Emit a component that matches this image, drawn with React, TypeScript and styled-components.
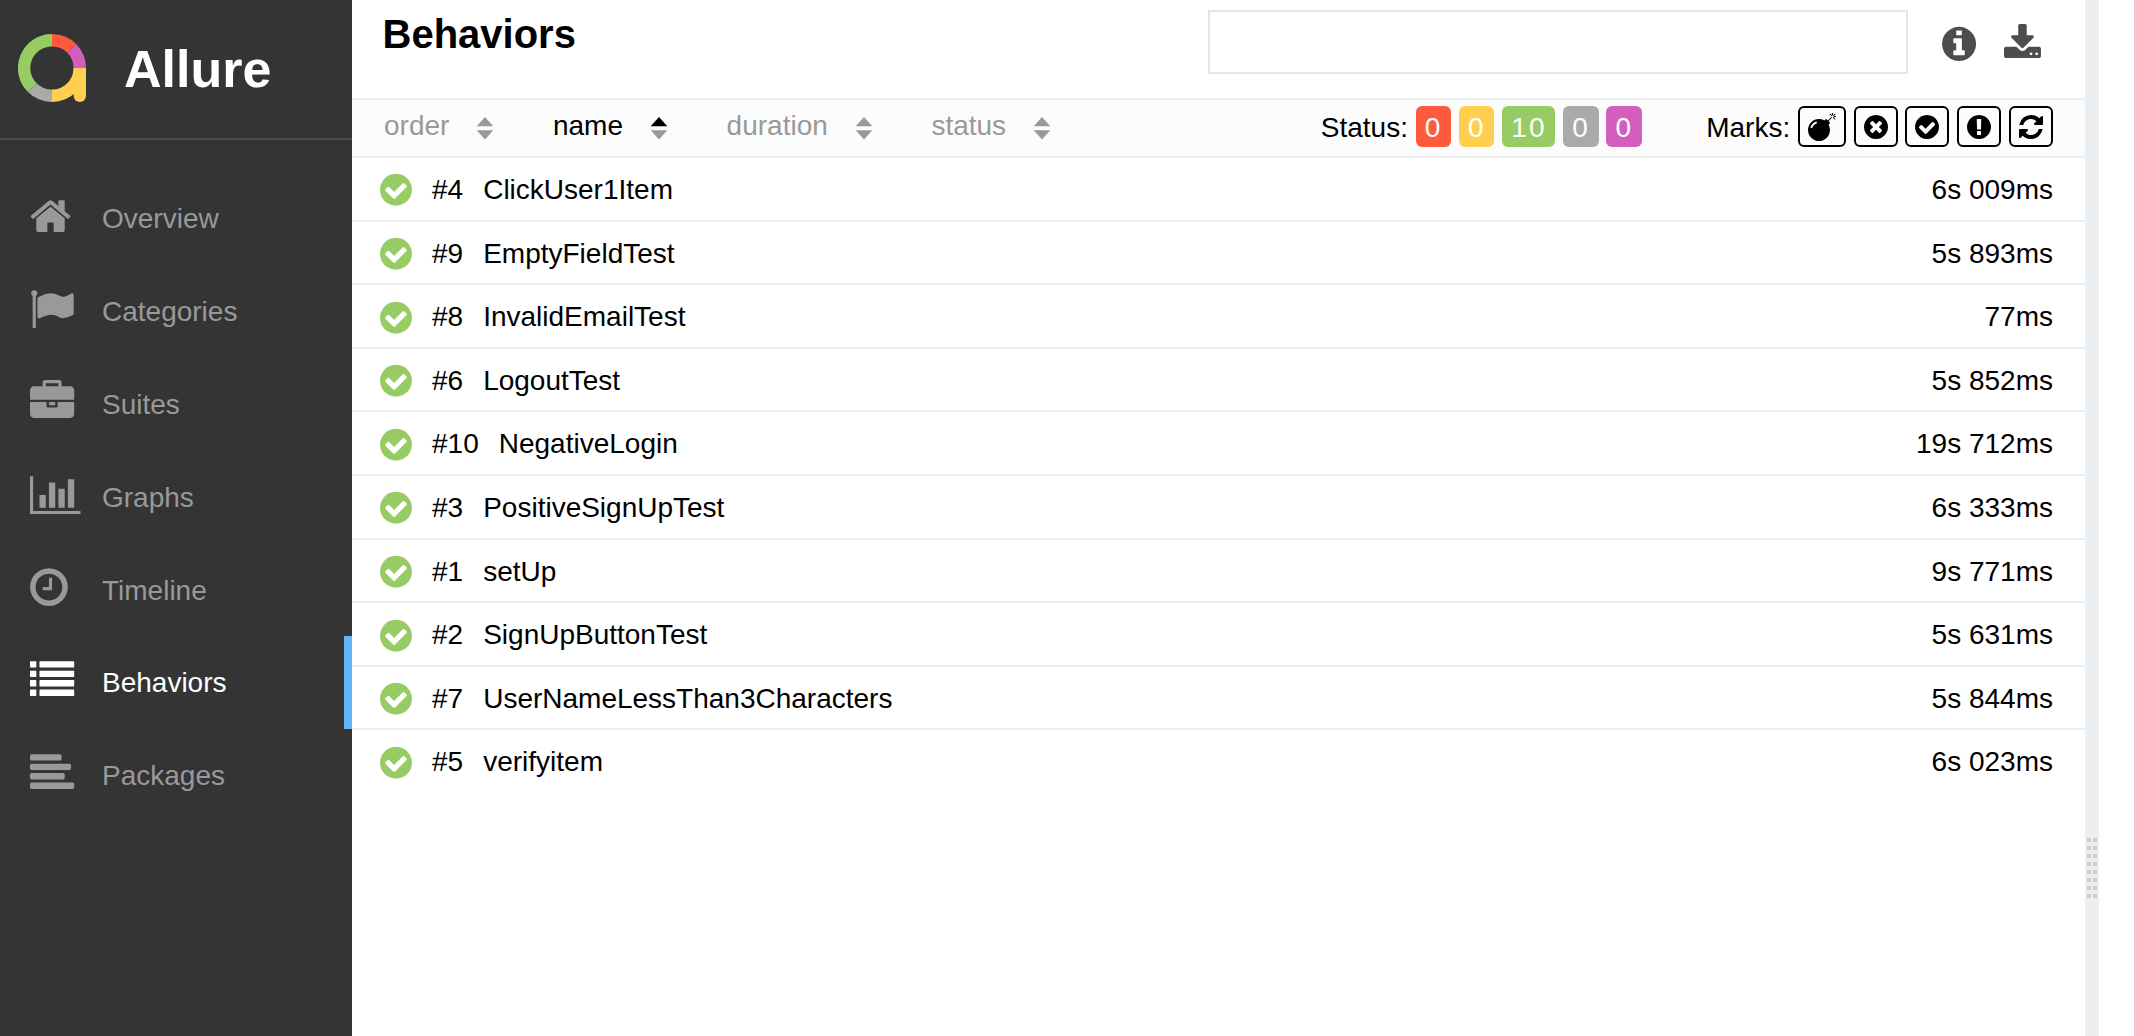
import React from "react";
import styled, { createGlobalStyle } from "styled-components";

const Global = createGlobalStyle`
  * { box-sizing: border-box; }
  html, body { margin: 0; padding: 0; }
  body {
    font-family: Helvetica, "Liberation Sans", Arial, sans-serif;
    font-size: 28px;
    color: #000;
    background: #fff;
    overflow: hidden;
  }
`;

const DISC =
  "q0 209-103 385.5t-279.5 279.5-385.5 103-385.5-103-279.5-279.5-103-385.5 103-385.5 279.5-279.5 385.5-103 385.5 103 279.5 279.5 103 385.5z";

const bar = (x: number, y: number, w: number, h: number, r: number) =>
  `M${x + r} ${y}h${w - 2 * r}q${r} 0 ${r} ${r}v${h - 2 * r}q0 ${r}-${r} ${r}h-${w - 2 * r}q-${r} 0-${r}-${r}v-${h - 2 * r}q0-${r} ${r}-${r}z`;

interface Glyph {
  d: string;
  x?: number;
  w?: number;
}

const glyphs: Record<string, Glyph> = {
  home: {
    x: 64,
    w: 1664,
    d: "M1472 992v480q0 26-19 45t-45 19h-384v-384h-256v384h-384q-26 0-45-19t-19-45v-480q0-1 .5-3t.5-3l575-474 575 474q1 2 1 6zm223-69l-62 74q-8 9-21 11h-3q-13 0-21-7l-692-577-692 577q-12 8-24 7-13-2-21-11l-62-74q-8-10-7-23.5t11-21.5l719-599q32-26 76-26t76 26l244 204v-195q0-14 9-23t23-9h192q14 0 23 9t9 23v408l219 182q10 8 11 21.5t-7 23.5z",
  },
  flag: {
    x: 20,
    d: "M320 256q0 72-64 110v1266q0 13-9.5 22.5t-22.5 9.5h-64q-13 0-22.5-9.5t-9.5-22.5v-1266q-64-38-64-110 0-53 37.5-90.5t90.5-37.5 90.5 37.5 37.5 90.5zm1472 64v763q0 25-12.5 38.5t-39.5 27.5q-215 116-369 116-61 0-123.5-22t-108.5-48-115.5-48-142.5-22q-192 0-464 146-17 9-33 9-26 0-45-19t-19-45v-742q0-32 31-55 21-14 79-43 236-120 421-120 107 0 200 29t219 88q38 19 88 19 54 0 117.5-21t110-47 88-47 54.5-21q26 0 45 19t19 45z",
  },
  briefcase: {
    d: "M640 256h512v-128h-512v128zm1152 640v480q0 66-47 113t-113 47h-1472q-66 0-113-47t-47-113v-480h672v160q0 26 19 45t45 19h320q26 0 45-19t19-45v-160h672zm-768 0v128h-256v-128h256zm768-480v384h-1792v-384q0-66 47-113t113-47h352v-160q0-40 28-68t68-28h576q40 0 68 28t28 68v160h352q66 0 113 47t47 113z",
  },
  chart: {
    w: 2048,
    d: "M640 896v512h-256v-512h256zm384-512v1024h-256v-1024h256zm1024 1152v128h-2048v-1536h128v1408h1920zm-640-896v768h-256v-768h256zm384-384v1152h-256v-1152h256z",
  },
  clock: {
    x: 128,
    w: 1536,
    d: "M1024 544v448q0 14-9 23t-23 9h-320q-14 0-23-9t-9-23v-64q0-14 9-23t23-9h224v-352q0-14 9-23t23-9h64q14 0 23 9t9 23zm416 352q0-148-73-273t-198-198-273-73-273 73-198 198-73 273 73 273 198 198 273 73 273-73 198-198 73-273zm224 0" + DISC,
  },
  list: {
    d: [128, 512, 896, 1280].map((y) => bar(0, y, 256, 256, 20) + bar(384, y, 1408, 256, 20)).join(""),
  },
  align: {
    d: bar(0, 128, 1280, 256, 64) + bar(0, 512, 1664, 256, 64) + bar(0, 896, 1408, 256, 64) + bar(0, 1280, 1792, 256, 64),
  },
  check: {
    x: 128,
    w: 1536,
    d: "M1412 734q0-28-18-46l-91-90q-19-19-45-19t-45 19l-408 407-226-226q-19-19-45-19t-45 19l-91 90q-18 18-18 46 0 27 18 45l362 362q19 19 45 19 27 0 46-19l543-543q18-18 18-45zm252 162" + DISC,
  },
  times: {
    x: 128,
    w: 1536,
    d: "M1277 1122q0-26-19-45l-181-181 181-181q19-19 19-45 0-27-19-46l-90-90q-19-19-46-19-26 0-45 19l-181 181-181-181q-19-19-45-19-27 0-46 19l-90 90q-19 19-19 46 0 26 19 45l181 181-181 181q-19 19-19 45 0 27 19 46l90 90q19 19 46 19 26 0 45-19l181-181 181 181q19 19 45 19 27 0 46-19l90-90q19-19 19-46zm387-226" + DISC,
  },
  exclamation: {
    x: 128,
    w: 1536,
    d: "M896 128q209 0 385.5 103t279.5 279.5 103 385.5-103 385.5-279.5 279.5-385.5 103-385.5-103-279.5-279.5-103-385.5 103-385.5 279.5-279.5 385.5-103zm128 1247v-190q0-14-9-23.5t-22-9.5h-192q-13 0-23 10t-10 23v190q0 13 10 23t23 10h192q13 0 22-9.5t9-23.5zm-2-344l18-621q0-12-10-18-10-8-24-8h-220q-14 0-24 8-10 6-10 18l17 621q0 10 10 17.5t24 7.5h185q14 0 23.5-7.5t10.5-17.5z",
  },
  refresh: {
    x: 128,
    w: 1536,
    d: "M1639 1056q0 5-1 7-64 268-268 434.5t-478 166.5q-146 0-282.5-55t-243.5-157l-129 129q-19 19-45 19t-45-19-19-45v-448q0-26 19-45t45-19h448q26 0 45 19t19 45-19 45l-137 137q71 66 161 102t187 36q134 0 250-65t186-179q11-17 53-117 8-23 30-23h192q13 0 22.5 9.5t9.5 22.5zm25-800v448q0 26-19 45t-45 19h-448q-26 0-45-19t-19-45 19-45l138-138q-148-137-349-137-134 0-250 65t-186 179q-11 17-53 117-8 23-30 23h-199q-13 0-22.5-9.5t-9.5-22.5v-7q65-268 270-434.5t480-166.5q146 0 284 55.5t245 156.5l130-129q19-19 45-19t45 19 19 45z",
  },
  bomb: {
    d: "M571 589q-10-25-34-35t-49 0q-108 44-191 127t-127 191q-10 25 0 49t35 34q13 5 24 5 42 0 60-40 34-84 98.5-148.5t148.5-98.5q25-11 35-35t0-49zm942-356l46 46-244 243 68 68q19 19 19 45.5t-19 45.5l-64 64q89 161 89 343 0 143-55.5 273.5t-150 225-225 150-273.5 55.5-273.5-55.5-225-150-150-225-55.5-273.5 55.5-273.5 150-225 225-150 273.5-55.5q182 0 343 89l64-64q19-19 45.5-19t45.5 19l68 68zm8-56q-10 10-22 10-13 0-23-10l-91-90q-9-10-9-23t9-23q10-9 23-9t23 9l90 91q10 9 10 22.5t-10 22.5zm230 230q-11 9-23 9t-23-9l-90-91q-10-9-10-22.5t10-22.5q9-10 22.5-10t22.5 10l91 90q9 10 9 23t-9 23zm41-183q0 14-9 23t-23 9h-96q-14 0-23-9t-9-23 9-23 23-9h96q14 0 23 9t9 23zm-192-192v96q0 14-9 23t-23 9-23-9-9-23v-96q0-14 9-23t23-9 23 9 9 23zm151 55l-91 90q-10 10-22 10-13 0-23-10-10-9-10-22.5t10-22.5l90-91q10-9 23-9t23 9q9 10 9 23t-9 23z",
  },
  info: {
    x: 128,
    w: 1536,
    d: "M1152 1376v-160q0-14-9-23t-23-9h-96v-512q0-14-9-23t-23-9h-320q-14 0-23 9t-9 23v160q0 14 9 23t23 9h96v320h-96q-14 0-23 9t-9 23v160q0 14 9 23t23 9h448q14 0 23-9t9-23zm-128-896v-160q0-14-9-23t-23-9h-192q-14 0-23 9t-9 23v160q0 14 9 23t23 9h192q14 0 23-9t9-23zm640 416" + DISC,
  },
  download: {
    x: 64,
    w: 1664,
    d: "M1344 1344q0-26-19-45t-45-19-45 19-19 45 19 45 45 19 45-19 19-45zm256 0q0-26-19-45t-45-19-45 19-19 45 19 45 45 19 45-19 19-45zm128-224v320q0 40-28 68t-68 28h-1472q-40 0-68-28t-28-68v-320q0-40 28-68t68-28h465l135 136q58 56 136 56t136-56l136-136h464q40 0 68 28t28 68zm-325-569q17 41-14 70l-448 448q-18 19-45 19t-45-19l-448-448q-31-29-14-70 17-39 59-39h256v-448q0-26 19-45t45-19h256q26 0 45 19t19 45v448h256q42 0 59 39z",
  },
};

const GlyphSvg = styled.svg`
  display: block;
  flex: none;
  overflow: visible;
  fill: currentColor;
`;

function Icon({ name, size }: { name: string; size: number }) {
  const g = glyphs[name];
  const x = g.x ?? 0;
  const w = g.w ?? 1792;
  return (
    <GlyphSvg width={(w * size) / 1792} height={size} viewBox={`${x} 0 ${w} 1792`}>
      <path d={g.d} />
    </GlyphSvg>
  );
}

const Page = styled.div`
  display: flex;
  height: 1036px;
`;

const Sidebar = styled.nav`
  width: 352px;
  flex: none;
  background: #343434;
  color: #999;
`;

const Brand = styled.div`
  display: flex;
  align-items: center;
  height: 140px;
  padding: 0 0 2px 18px;
  border-bottom: 2px solid #4c4c4c;
`;

const BrandName = styled.span`
  margin-left: 38px;
  padding-top: 1px;
  font-size: 52px;
  line-height: 60px;
  font-weight: bold;
  color: #fff;
`;

const Menu = styled.ul`
  list-style: none;
  margin: 0;
  padding: 32px 0 0;
`;

const MenuItem = styled.li<{ $active?: boolean }>`
  display: flex;
  align-items: center;
  height: 92.8px;
  padding-left: 30px;
  border-right: 8px solid ${(p) => (p.$active ? "#64b5f6" : "transparent")};
  color: ${(p) => (p.$active ? "#fff" : "#999")};
`;

const MenuIcon = styled.span`
  width: 72px;
  margin-bottom: 4px;
`;

const MenuLabel = styled.span`
  padding-top: 2px;
`;

const Main = styled.main`
  width: 1733px;
  flex: none;
`;

const Header = styled.header`
  display: flex;
  height: 98px;
  padding: 10px 44px 0 30.5px;
`;

const Title = styled.h1`
  flex: 1;
  margin: 0;
  font-size: 40px;
  line-height: 48px;
  font-weight: bold;
`;

const Search = styled.input`
  width: 700px;
  height: 64px;
  border: 2px solid #e5e5e5;
  background: #fff;
  outline: none;
`;

const HeaderIcon = styled.span<{ $left: number }>`
  margin: 14px 0 0 ${(p) => p.$left}px;
  color: #4d4d4d;
`;

const Toolbar = styled.div`
  display: flex;
  height: 60px;
  padding: 6px 32px 0 32px;
  border-top: 2px solid #eceff1;
  border-bottom: 2px solid #eceff1;
  background: #fcfcfc;
  line-height: 43px;
`;

const Sorters = styled.div`
  display: flex;
  flex: 1;
  gap: 58.6px;
  margin-top: -2px;
`;

const Sorter = styled.div<{ $active?: boolean }>`
  display: flex;
  align-items: flex-start;
  gap: 27px;
  color: ${(p) => (p.$active ? "#000" : "#999")};
`;

const SortArrows = styled.svg`
  display: block;
  width: 18px;
  height: 23px;
  margin-top: 12.5px;
`;

const Group = styled.div`
  display: flex;
  align-items: flex-start;
  gap: 7.78px;
`;

const Caption = styled.span<{ $left?: number }>`
  margin-left: ${(p) => p.$left ?? 0}px;
`;

const Badge = styled.span<{ $color: string }>`
  height: 41px;
  padding: 0 8.8px 0 9px;
  border-radius: 6px;
  background: ${(p) => p.$color};
  color: #fff;
  letter-spacing: 2.1px;
`;

const Mark = styled.span`
  display: flex;
  align-items: center;
  height: 41px;
  padding: 0 8px;
  border: 2px solid #000;
  border-radius: 6px;
`;

const Row = styled.div`
  display: flex;
  align-items: center;
  height: 63.6px;
  padding: 2.6px 32px 0 28px;
  border-bottom: 2px solid #eceff1;
  &:last-child { border-bottom-color: transparent; }
`;

const Passed = styled.span`
  width: 52px;
  color: #97cc64;
`;

const Name = styled.span`
  flex: 1;
  margin-left: 20px;
`;

const Splitter = styled.div`
  display: flex;
  width: 14px;
  flex: none;
  padding: 838px 2px 0;
  background: #eceff1;
`;

const menu = [
  ["home", "Overview"],
  ["flag", "Categories"],
  ["briefcase", "Suites"],
  ["chart", "Graphs"],
  ["clock", "Timeline"],
  ["list", "Behaviors"],
  ["align", "Packages"],
];

const tests: [number, string, string][] = [
  [4, "ClickUser1Item", "6s 009ms"],
  [9, "EmptyFieldTest", "5s 893ms"],
  [8, "InvalidEmailTest", "77ms"],
  [6, "LogoutTest", "5s 852ms"],
  [10, "NegativeLogin", "19s 712ms"],
  [3, "PositiveSignUpTest", "6s 333ms"],
  [1, "setUp", "9s 771ms"],
  [2, "SignUpButtonTest", "5s 631ms"],
  [7, "UserNameLessThan3Characters", "5s 844ms"],
  [5, "verifyitem", "6s 023ms"],
];

const statuses: [string, number][] = [
  ["#fd5a3e", 0],
  ["#ffd050", 0],
  ["#97cc64", 10],
  ["#aaa", 0],
  ["#d35ebe", 0],
];

function Logo() {
  return (
    <svg width="68" height="68" viewBox="0 0 68 68" fill="none" strokeWidth="12.4">
      <path d="M34 6.2A27.8 27.8 0 0 0 14.3 53.7" stroke="#97cc64" />
      <path d="M14.3 53.7A27.8 27.8 0 0 0 34 61.8" stroke="#aaa" />
      <path d="M34 6.2A27.8 27.8 0 0 1 53.7 14.3" stroke="#fd5a3e" />
      <path d="M53.7 14.3A27.8 27.8 0 0 1 61.8 34" stroke="#d35ebe" />
      <path d="M34 61.8A27.8 27.8 0 0 0 61.8 34" stroke="#ffd050" />
      <path d="M55.6 34H68V61.8a6.2 6.2 0 0 1-12.4 0z" fill="#ffd050" />
    </svg>
  );
}

export default function App() {
  return (
    <Page>
      <Global />
      <Sidebar>
        <Brand>
          <Logo />
          <BrandName>Allure</BrandName>
        </Brand>
        <Menu>
          {menu.map(([icon, label]) => (
            <MenuItem key={label} $active={label === "Behaviors"}>
              <MenuIcon>
                <Icon name={icon} size={44.2} />
              </MenuIcon>
              <MenuLabel>{label}</MenuLabel>
            </MenuItem>
          ))}
        </Menu>
      </Sidebar>
      <Main>
        <Header>
          <Title>Behaviors</Title>
          <Search />
          <HeaderIcon $left={33.5}>
            <Icon name="info" size={39.8} />
          </HeaderIcon>
          <HeaderIcon $left={28}>
            <Icon name="download" size={39.8} />
          </HeaderIcon>
        </Header>
        <Toolbar>
          <Sorters>
            {["order", "name", "duration", "status"].map((s) => (
              <Sorter key={s} $active={s === "name"}>
                {s}
                <SortArrows viewBox="0 0 18 23">
                  <path d="M9 0 17.3 9.3H.7z" fill={s === "name" ? "#000" : "#999"} />
                  <path d="M.7 13.3H17.3L9 22.6z" fill="#999" />
                </SortArrows>
              </Sorter>
            ))}
          </Sorters>
          <Group>
            <Caption>Status:</Caption>
            {statuses.map(([color, count]) => (
              <Badge key={color} $color={color}>
                {count}
              </Badge>
            ))}
          </Group>
          <Group>
            <Caption $left={64.3}>Marks:</Caption>
            {["bomb", "times", "check", "exclamation", "refresh"].map((m) => (
              <Mark key={m}>
                <Icon name={m} size={28} />
              </Mark>
            ))}
          </Group>
        </Toolbar>
        <div>
          {tests.map(([order, name, time]) => (
            <Row key={order}>
              <Passed>
                <Icon name="check" size={37.33} />
              </Passed>
              #{order}
              <Name>{name}</Name>
              {time}
            </Row>
          ))}
        </div>
      </Main>
      <Splitter>
        <svg width="10" height="60" fill="#cecece">
          {[0, 1, 2, 3, 4, 5, 6, 7].map((i) => (
            <React.Fragment key={i}>
              <rect x="0" y={i * 8} width="4" height="4" />
              <rect x="6" y={i * 8} width="4" height="4" />
            </React.Fragment>
          ))}
        </svg>
      </Splitter>
    </Page>
  );
}
